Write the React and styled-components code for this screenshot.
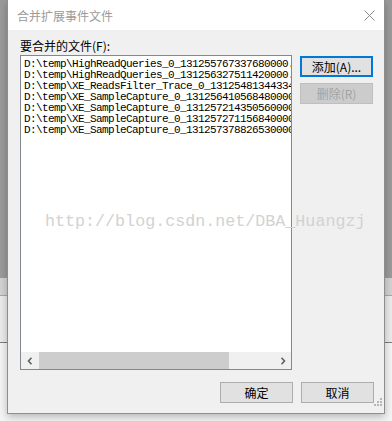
import React from "react";
import styled, { createGlobalStyle } from "styled-components";

const files = [
  "D:\\temp\\HighReadQueries_0_131255767337680000.xel",
  "D:\\temp\\HighReadQueries_0_131256327511420000.xel",
  "D:\\temp\\XE_ReadsFilter_Trace_0_131254813443340000.xel",
  "D:\\temp\\XE_SampleCapture_0_131256410568480000.xel",
  "D:\\temp\\XE_SampleCapture_0_131257214350560000.xel",
  "D:\\temp\\XE_SampleCapture_0_131257271156840000.xel",
  "D:\\temp\\XE_SampleCapture_0_131257378826530000.xel",
];

const GlobalStyle = createGlobalStyle`
  html, body {
    margin: 0;
    padding: 0;
  }
  body {
    width: 392px;
    height: 421px;
    overflow: hidden;
    font-family: "Noto Sans CJK SC", "Liberation Sans", sans-serif;
    background: linear-gradient(
      to bottom,
      #9b9b9b 0,
      #9b9b9b 278px,
      #d3d3d3 278px,
      #d3d3d3 295px,
      #a9a9a9 295px,
      #a9a9a9 296px,
      #ececec 296px,
      #ececec 342px,
      #7d7d7d 342px,
      #7d7d7d 343px,
      #f5f5f5 343px
    );
  }
`;

const Screen = styled.div`
  position: relative;
  height: 421px;
  padding: 0 7px;
  box-sizing: border-box;
`;

const Dialog = styled.div`
  width: 378px;
  height: 414px;
  box-sizing: border-box;
  border: 1px solid #8e8e8e;
  border-top: none;
  background: #f0f0f0;
  box-shadow: 0 3px 8px rgba(0, 0, 0, 0.25);
  display: flex;
  flex-direction: column;
  position: relative;
`;

const TitleBar = styled.div`
  height: 30px;
  background: #fff;
  display: flex;
  align-items: center;
  justify-content: space-between;
  padding: 0 9px 0 9px;
  font-size: 12px;
  color: #9a9a9a;
`;

const Body = styled.div`
  flex: 1;
  display: flex;
  flex-direction: column;
  padding: 8px 10px 10px 12px;
`;

const Label = styled.div`
  font-size: 12px;
  line-height: 16px;
  color: #000;
  margin-bottom: 1px;
`;

const Row = styled.div`
  display: flex;
  gap: 8px;
`;

const ListBox = styled.div`
  width: 272px;
  height: 315px;
  box-sizing: border-box;
  border: 1px solid #828790;
  background: #fff;
  display: flex;
  flex-direction: column;
`;

const Items = styled.div`
  flex: 1;
  overflow: hidden;
  padding: 3px 0 0 3px;
`;

const Item = styled.div`
  font-family: "Liberation Mono", monospace;
  font-size: 11px;
  letter-spacing: -0.6px;
  line-height: 11px;
  height: 11px;
  white-space: nowrap;
  color: #000;
`;

const HScroll = styled.div`
  height: 17px;
  display: flex;
  background: #f0f0f0;
`;

const Arrow = styled.div`
  width: 17px;
  display: flex;
  align-items: center;
  justify-content: center;
`;

const Track = styled.div`
  flex: 1;
  display: flex;
  padding: 0 1px;
`;

const Thumb = styled.div`
  width: 190px;
  background: #cdcdcd;
`;

const Buttons = styled.div`
  display: flex;
  flex-direction: column;
  gap: 6px;
  padding-top: 1px;
`;

const Button = styled.button`
  width: 73px;
  height: 21px;
  box-sizing: border-box;
  padding: 0;
  font-family: "Noto Sans CJK SC", "Liberation Sans", sans-serif;
  font-size: 12px;
  line-height: 1;
  color: ${(p) => (p.disabled ? "#a3a3a3" : "#000")};
  background: ${(p) => (p.disabled ? "#cccccc" : "#e1e1e1")};
  border: ${(p) =>
    p.focused ? "2px solid #0078d7" : p.disabled ? "1px solid #bfbfbf" : "1px solid #adadad"};
`;

const Footer = styled.div`
  margin-top: auto;
  display: flex;
  justify-content: flex-end;
  gap: 8px;
`;

const Grip = styled.div`
  position: absolute;
  right: 1px;
  bottom: 1px;
`;

const Watermark = styled.div`
  position: absolute;
  left: 45px;
  top: 211px;
  font-family: "Liberation Mono", monospace;
  font-size: 16.7px;
  line-height: 22px;
  color: #d2d2d2;
  white-space: nowrap;
  pointer-events: none;
`;

const Chevron = ({ dir }) => (
  <svg width="6" height="8" viewBox="0 0 6 8">
    <path
      d={dir === "left" ? "M4.5 0.8 L1.5 4 L4.5 7.2" : "M1.5 0.8 L4.5 4 L1.5 7.2"}
      fill="none"
      stroke="#606060"
      strokeWidth="1.6"
    />
  </svg>
);

export default function App() {
  return (
    <>
      <GlobalStyle />
      <Screen>
        <Dialog>
          <TitleBar>
            <span>合并扩展事件文件</span>
            <svg width="11" height="11" viewBox="0 0 11 11">
              <path d="M0.5 0.5 L10.5 10.5 M10.5 0.5 L0.5 10.5" stroke="#8a8a8a" strokeWidth="1" />
            </svg>
          </TitleBar>
          <Body>
            <Label>要合并的文件(F):</Label>
            <Row>
              <ListBox>
                <Items>
                  {files.map((f) => (
                    <Item key={f}>{f}</Item>
                  ))}
                </Items>
                <HScroll>
                  <Arrow>
                    <Chevron dir="left" />
                  </Arrow>
                  <Track>
                    <Thumb />
                  </Track>
                  <Arrow>
                    <Chevron dir="right" />
                  </Arrow>
                </HScroll>
              </ListBox>
              <Buttons>
                <Button focused>添加(A)...</Button>
                <Button disabled>删除(R)</Button>
              </Buttons>
            </Row>
            <Footer>
              <Button>确定</Button>
              <Button>取消</Button>
            </Footer>
          </Body>
          <Grip>
            <svg width="10" height="10" viewBox="0 0 10 10" fill="#b5b5b5">
              <rect x="7" y="1" width="2" height="2" />
              <rect x="4" y="4" width="2" height="2" />
              <rect x="7" y="4" width="2" height="2" />
              <rect x="1" y="7" width="2" height="2" />
              <rect x="4" y="7" width="2" height="2" />
              <rect x="7" y="7" width="2" height="2" />
            </svg>
          </Grip>
        </Dialog>
        <Watermark>http://blog.csdn.net/DBA_Huangzj</Watermark>
      </Screen>
    </>
  );
}
